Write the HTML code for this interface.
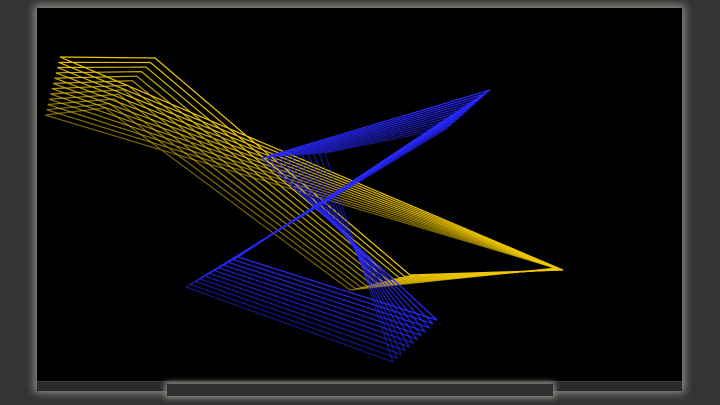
<!DOCTYPE html>
<html><head><meta charset="utf-8"><style>
html,body{margin:0;padding:0;width:720px;height:405px;overflow:hidden;background:#333435;}
#tv{position:absolute;left:37px;top:8px;width:645px;height:382px;background:#000;box-shadow:0 0 8px 3px #8a8c82;}
#bar{position:absolute;left:0;top:373px;width:645px;height:9px;background:#2b2b2b;border-top:1px solid #3a3a3a;}
#stand{position:absolute;left:167px;top:384px;width:386px;height:12px;background:#303030;box-shadow:0 0 6px 2px #8a8b80;}
svg{position:absolute;left:0;top:0;}
</style></head><body>
<div id="tv"><div id="bar"></div></div>
<div id="stand"></div>
<svg id="s" width="720" height="405" viewBox="0 0 720 405"></svg>
<script>
var s=document.getElementById('s');
function lerp(a,b,t){return [a[0]+(b[0]-a[0])*t,a[1]+(b[1]-a[1])*t];}
function draw(first,last,color,n){
  for(var i=n-1;i>=0;i--){
    var t=i/(n-1);
    var pts=first.map(function(p,k){return lerp(p,last[k],t);});
    var pl=document.createElementNS('http://www.w3.org/2000/svg','polygon');
    pl.setAttribute('points',pts.map(function(p){return p[0].toFixed(1)+','+p[1].toFixed(1);}).join(' '));
    pl.setAttribute('fill','none');
    pl.setAttribute('stroke',color);
    pl.setAttribute('stroke-width','1.2');
    pl.setAttribute('opacity',(1-0.5*t).toFixed(2));
    s.appendChild(pl);
  }
}
draw([[60,57],[155,58],[410,275],[563,270]],[[45,115],[105,108],[350,290],[555,268]],'#f0c800',12);
draw([[490,90],[262,158],[437,320],[238,257]],[[448,128],[325,153],[393,362],[186,287]],'#2828ff',12);
</script>
</body></html>
